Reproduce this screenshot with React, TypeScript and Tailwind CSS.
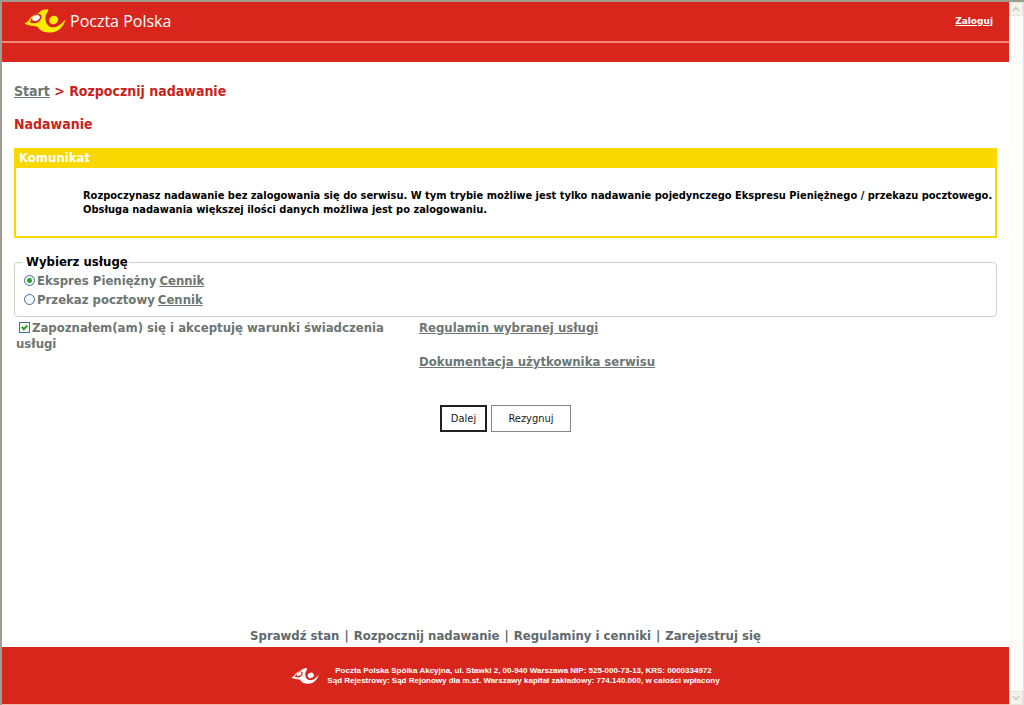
import { useState } from "react";
import type { ReactNode } from "react";

function Horn({ body, left, right, className }: { body: string; left: string; right: string; className: string }) {
  return (
    <svg viewBox="0 0 124 72" className={className} aria-hidden="true">
      <path
        fill={body}
        d="M0 43 C10 41 13 34 20 25 C27 16 37 18 46 9 C50 4 58 1 70 1 C75 2 71 7 68 11 C65 16 63 22 63 28 C63 38 67 48 76 53 C87 57 97 54 107 47 C114 42 117 37 123 32 C120 47 109 60 97 66 C82 73 59 72 48 63 C43 59 44 55 38 53 C26 50 13 52 0 43Z"
      />
      <path fill="#d8261c" d="M17 41 C19 30 26 20 38 16 C48 13 54 19 51 28 C47 37 39 43 30 43 C25 43 21 41 17 41Z" />
      <ellipse cx="35" cy="27" rx="12" ry="8" transform="rotate(-25 35 27)" fill={left} />
      <ellipse cx="88" cy="33" rx="14" ry="12" transform="rotate(-25 88 33)" fill={right} />
    </svg>
  );
}

function ServiceOption({ id, label, checked, onSelect }: { id: string; label: string; checked: boolean; onSelect: () => void }) {
  return (
    <div className="flex h-[19px] items-center">
      <input
        id={id}
        type="radio"
        name="service"
        checked={checked}
        onChange={onSelect}
        className="mr-0.5 size-[11px] appearance-none rounded-full border border-[#3f6f92] bg-[#f4f8f8] checked:bg-[radial-gradient(circle,#2ba12b_2px,#f4f8f8_3px)]"
      />
      <label htmlFor={id}>{label}</label>
      <a href="#cennik" className="ml-[3px] underline">Cennik</a>
    </div>
  );
}

function ScrollButton({ down = false }: { down?: boolean }) {
  return (
    <button type="button" aria-label={down ? "W dół" : "W górę"} className="flex h-3.5 w-full items-center justify-center border border-[#e6e5dc] bg-[#f4f3ee]">
      <svg viewBox="0 0 9 6" className="h-1.5 w-2" fill="none" stroke="#c3c2b8" strokeWidth="1.5">
        <path d={down ? "M1 1 4.5 4.5 8 1" : "M1 5 4.5 1.5 8 5"} />
      </svg>
    </button>
  );
}

function FooterLink({ children }: { children: ReactNode }) {
  return <a href="#nawigacja">{children}</a>;
}

export default function App() {
  const [service, setService] = useState("ekspres");
  const [accepted, setAccepted] = useState(true);

  return (
    <div className="flex min-h-screen border-t-2 border-l-2 border-t-[#a09c90] border-l-[#a09c94] bg-white font-['DejaVu_Sans_Condensed','DejaVu_Sans',sans-serif] text-[13px] leading-4 font-bold text-[#6d7673]">
      <div className="flex flex-1 flex-col">
        <header className="bg-[#d8261c] text-white">
          <div className="flex h-[41px] items-center justify-between border-b-2 border-[#f0857c] pr-4 pb-0.5 pl-[22px]">
            <a href="#start" className="flex items-center gap-1">
              <Horn body="#ffed00" left="#ffffff" right="#ffed00" className="h-6 w-[42px]" />
              <span className="font-['Open_Sans',sans-serif] text-base leading-5 font-normal">Poczta Polska</span>
            </a>
            <a href="#zaloguj" className="font-['DejaVu_Sans',sans-serif] text-[9px] leading-3 underline">Zaloguj</a>
          </div>
          <div className="h-[19px]" />
        </header>

        <main className="flex-1 pt-[21px] pr-3 pl-3">
          <nav aria-label="Ścieżka" className="text-sm leading-4 text-[#cb221b]">
            <a href="#start" className="text-[#6d7673] underline">Start</a> &gt; Rozpocznij nadawanie
          </nav>
          <h1 className="mt-[17px] text-sm leading-4 text-[#cb221b]">Nadawanie</h1>

          <section className="mt-4 border-2 border-[#f8d800]">
            <h2 className="bg-[#f8d800] px-[3px] pb-0.5 text-white">Komunikat</h2>
            <p className="pt-[21px] pb-[19px] pl-[67px] text-[11px] leading-[14px] text-black">
              Rozpoczynasz nadawanie bez zalogowania się do serwisu. W tym trybie możliwe jest tylko nadawanie pojedynczego Ekspresu Pieniężnego / przekazu pocztowego. Obsługa nadawania większej ilości danych możliwa jest po zalogowaniu.
            </p>
          </section>

          <fieldset className="mt-4 rounded border border-[#d0d0ca] pt-px pb-[7px] pl-[9px]">
            <legend className="-ml-px pr-px pl-[3px] text-black">Wybierz usługę</legend>
            <ServiceOption id="ekspres" label="Ekspres Pieniężny" checked={service === "ekspres"} onSelect={() => setService("ekspres")} />
            <ServiceOption id="przekaz" label="Przekaz pocztowy" checked={service === "przekaz"} onSelect={() => setService("przekaz")} />
          </fieldset>

          <div className="mt-[3px] grid grid-cols-[405px_1fr]">
            <div className="pr-6 pl-0.5">
              <input
                id="accept"
                type="checkbox"
                checked={accepted}
                onChange={(event) => setAccepted(event.target.checked)}
                className="peer sr-only"
              />
              <label htmlFor="accept">
                <svg viewBox="0 0 11 11" className="mr-0.5 ml-[3px] inline size-[11px] align-[-1px]" aria-hidden="true">
                  <rect x="0.5" y="0.5" width="10" height="10" fill="#f8faf8" stroke="#3f6f92" />
                  {accepted && <path d="M2.8 4.8 4.8 7.2 8.3 3.4" fill="none" stroke="#21a121" strokeWidth="2" />}
                </svg>
                Zapoznałem(am) się i akceptuję warunki świadczenia usługi
              </label>
            </div>
            <div className="flex flex-col items-start gap-[18px]">
              <a href="#regulamin" className="underline">Regulamin wybranej usługi</a>
              <a href="#dokumentacja" className="underline">Dokumentacja użytkownika serwisu</a>
            </div>
          </div>

          <div className="mt-[35px] flex justify-center gap-1 text-[11px] font-normal text-[#181818]">
            <button type="button" className="h-[27px] w-[47px] border-2 border-[#202020] bg-white">Dalej</button>
            <button type="button" className="h-[27px] w-20 border border-[#858585] bg-white">Rezygnuj</button>
          </div>
        </main>

        <nav aria-label="Stopka" className="flex justify-center gap-[5px] pb-[3px] text-[#606a6c]">
          <FooterLink>Sprawdź stan</FooterLink>|
          <FooterLink>Rozpocznij nadawanie</FooterLink>|
          <FooterLink>Regulaminy i cenniki</FooterLink>|
          <FooterLink>Zarejestruj się</FooterLink>
        </nav>
        <footer className="flex h-[58px] items-center justify-center gap-2 border-b border-[#f3b8a8] bg-[#d8261c] font-['Liberation_Sans',sans-serif] text-[8px] leading-[10px] text-white">
          <Horn body="#ffffff" left="#ffffff" right="#ffffff" className="h-4 w-7" />
          <p className="text-center">
            Poczta Polska Spółka Akcyjna, ul. Stawki 2, 00-940 Warszawa NIP: 525-000-73-13, KRS: 0000334972
            <br />
            Sąd Rejestrowy: Sąd Rejonowy dla m.st. Warszawy kapitał zakładowy: 774.140.000, w całości wpłacony
          </p>
        </footer>
      </div>
      <aside aria-label="Pasek przewijania" className="flex w-[15px] flex-col justify-between border-r border-[#e4e2d0] bg-[#fdfdfa]">
        <ScrollButton />
        <ScrollButton down />
      </aside>
    </div>
  );
}
